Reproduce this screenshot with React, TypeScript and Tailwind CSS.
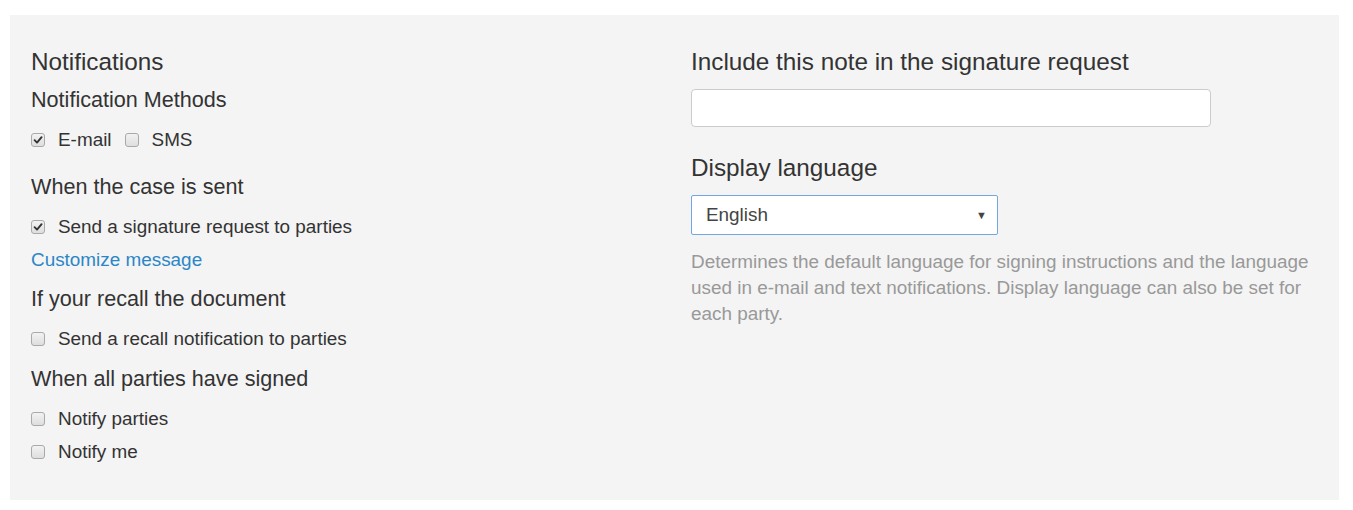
import { useState } from "react";

const font = { fontFamily: '"Liberation Sans", Arial, sans-serif' };

function Check({ checked, label }: { checked?: boolean; label: string }) {
  const [on, setOn] = useState(!!checked);
  return (
    <label className="flex items-center cursor-pointer" onClick={() => setOn(!on)}>
      <span className="relative w-[14px] h-[14px] rounded-[3px] border border-[#a9a9a9] bg-gradient-to-b from-[#f2f2f2] to-[#dedede] flex items-center justify-center">
        {on && (
          <svg width="10" height="10" viewBox="0 0 10 10">
            <path d="M1.6 5.2 L4 7.6 L8.6 2.2" fill="none" stroke="#333" strokeWidth="1.9" strokeLinecap="round" strokeLinejoin="round" />
          </svg>
        )}
      </span>
      <span className="ml-[13px] text-[18.9px] text-[#333]">{label}</span>
    </label>
  );
}

export default function App() {
  return (
    <div className="bg-white w-[1353px] h-[510px] pt-[15px] pl-[10px]" style={font}>
      <div className="w-[1329px] h-[485px] bg-[#f4f4f4] grid grid-cols-[660px_1fr] pl-[21px]">
        {/* Left column */}
        <div className="flex flex-col pt-[32px]">
          <div className="h-[30px] flex items-center text-[24.3px] text-[#333]">Notifications</div>
          <div className="h-[30px] mt-[8px] flex items-center text-[21.6px] text-[#333]">Notification Methods</div>
          <div className="h-[30px] mt-[10px] flex items-center gap-[13px]">
            <Check checked label="E-mail" />
            <Check label="SMS" />
          </div>
          <div className="h-[30px] mt-[17px] flex items-center text-[21.6px] text-[#333]">When the case is sent</div>
          <div className="h-[30px] mt-[10px] flex items-center">
            <Check checked label="Send a signature request to parties" />
          </div>
          <div className="h-[30px] mt-[3px] flex items-center">
            <a href="#" className="text-[18.9px] text-[#2b86c6]">Customize message</a>
          </div>
          <div className="h-[30px] mt-[9px] flex items-center text-[21.6px] text-[#333]">If your recall the document</div>
          <div className="h-[30px] mt-[10px] flex items-center">
            <Check label="Send a recall notification to parties" />
          </div>
          <div className="h-[30px] mt-[10px] flex items-center text-[21.6px] text-[#333]">When all parties have signed</div>
          <div className="h-[30px] mt-[10px] flex items-center">
            <Check label="Notify parties" />
          </div>
          <div className="h-[30px] mt-[3px] flex items-center">
            <Check label="Notify me" />
          </div>
        </div>

        {/* Right column */}
        <div className="flex flex-col pt-[32px]">
          <div className="h-[30px] flex items-center text-[24.3px] text-[#333]">Include this note in the signature request</div>
          <input
            type="text"
            className="mt-[12px] w-[520px] h-[38px] bg-white border border-[#cccccc] rounded-[4px] px-3 text-[18.9px] outline-none"
          />
          <div className="h-[30px] mt-[26px] flex items-center text-[24.3px] text-[#333]">Display language</div>
          <div className="mt-[12px] w-[307px] h-[40px] bg-white border border-[#76a6e2] rounded-[2px] flex items-center justify-between pl-[14px] pr-[10px]">
            <span className="text-[18.9px] text-[#444]">English</span>
            <span className="text-[11px] text-[#444]">▼</span>
          </div>
          <p className="mt-[14px] w-[625px] text-[18.9px] leading-[26px] text-[#999]">
            Determines the default language for signing instructions and the language used in e-mail and text
            notifications. Display language can also be set for each party.
          </p>
        </div>
      </div>
    </div>
  );
}
